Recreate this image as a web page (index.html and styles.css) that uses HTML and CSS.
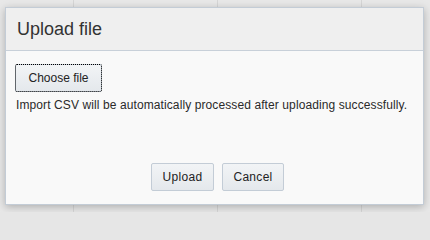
FILE: index.html
```html
<!DOCTYPE html>
<html>
<head>
<meta charset="utf-8">
<link rel="stylesheet" href="styles.css">
</head>
<body>
<div class="backdrop">
  <div class="dialog">
    <div class="dialog-header">
      <h1 class="dialog-title">Upload file</h1>
    </div>
    <div class="dialog-body">
      <div class="file-row"><button class="btn btn-focus" type="button">Choose file</button></div>
      <p class="hint">Import CSV will be automatically processed after uploading successfully.</p>
    </div>
    <div class="dialog-footer">
      <button class="btn btn-action" type="button">Upload</button>
      <button class="btn btn-action btn-cancel" type="button">Cancel</button>
    </div>
  </div>
</div>
</body>
</html>
```
FILE: styles.css
```css
html, body {
  margin: 0;
  padding: 0;
  background: #e6e6e6;
}
body {
  width: 430px;
  height: 212px;
  overflow: hidden;
  font-family: "Liberation Sans", Arial, sans-serif;
}
.backdrop {
  height: 212px;
  box-sizing: border-box;
  padding: 7px 6px 0 5px;
  background:
    repeating-linear-gradient(to right, transparent 0, transparent 73px, #d6d6d6 73px, #d6d6d6 74px, transparent 74px, transparent 144px),
    #e8e8e8;
}
.dialog {
  width: 419px;
  height: 198px;
  box-sizing: border-box;
  border: 1px solid #c3ccd6;
  background: #f9f9f9;
  box-shadow: 0 2px 8px rgba(0,0,0,0.25);
  display: flex;
  flex-direction: column;
}
.dialog-header {
  background: #efefef;
  border-bottom: 1px solid #c8d0d9;
  height: 43px;
  display: flex;
  align-items: center;
  padding-left: 11px;
  box-sizing: border-box;
}
.dialog-title {
  margin: 0;
  font-size: 18px;
  font-weight: normal;
  color: #333;
}
.dialog-body {
  padding: 13px 9px 0 9px;
  flex: 1;
}
.btn {
  font-family: "Liberation Sans", Arial, sans-serif;
  font-size: 12px;
  color: #222;
  border: 1px solid #c3ccd6;
  border-radius: 2px;
  background: linear-gradient(#f2f4f6, #e4e8ec);
  padding: 0;
  height: 28px;
}
.btn-focus {
  width: 87px;
  outline: 1px dotted #000;
  outline-offset: -1px;
}
.hint {
  margin: 6px 0 0 1px;
  font-size: 12px;
  letter-spacing: 0.1px;
  color: #2a2a2a;
}
.dialog-footer {
  display: flex;
  justify-content: center;
  gap: 8px;
  padding: 0 0 13px 6px;
}
.btn-action {
  width: 63px;
  letter-spacing: 0.3px;
}
.btn-cancel {
  width: 62px;
}
```
